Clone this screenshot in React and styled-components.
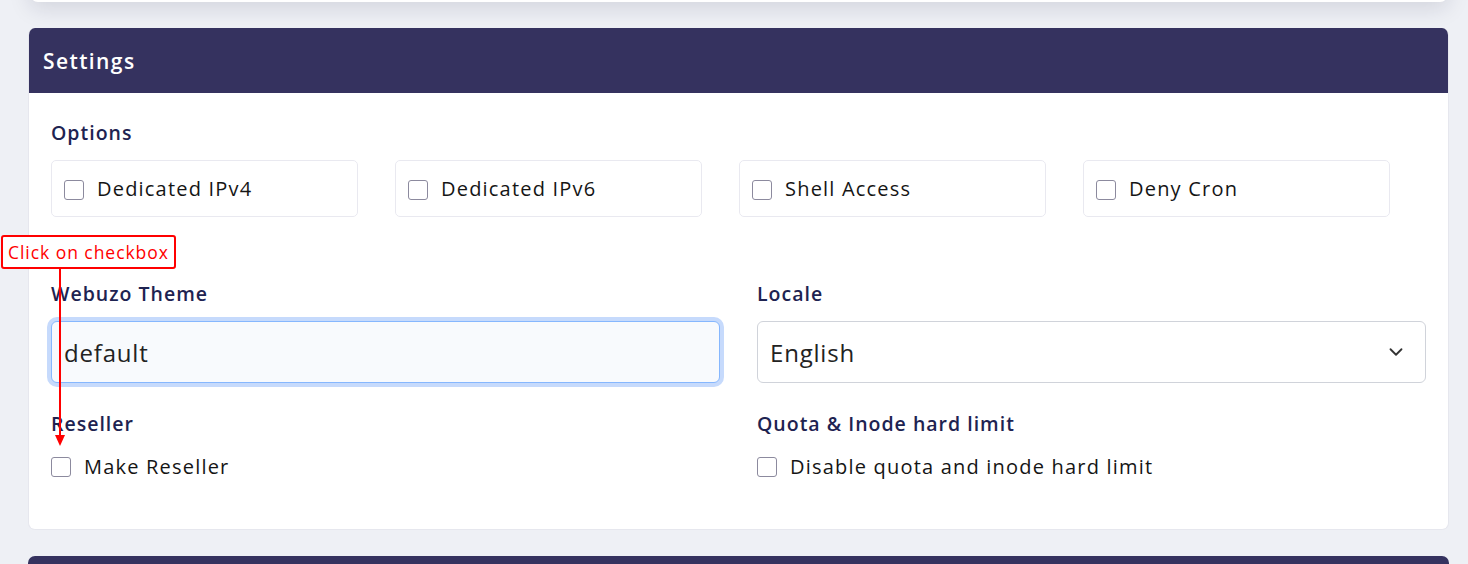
import React from 'react'
import styled, { createGlobalStyle } from 'styled-components';
import { ChevronDown } from 'lucide-react';

const GlobalStyle = createGlobalStyle`
  html, body {
    margin: 0;
    padding: 0;
    background: #eef0f5;
    font-family: "Open Sans", "Noto Sans", sans-serif;
    overflow: hidden;
  }
`;

const Page = styled.div`
  position: relative;
  display: flow-root;
  padding: 0 19px 0 28px;
  height: 564px;
`;

const TopCard = styled.div`
  height: 42px;
  margin: -40px 1px 0 2px;
  background: #fff;
  border-radius: 0 0 8px 8px;
  box-shadow: 0 6px 22px rgba(20, 24, 60, 0.13);
`;

const Card = styled.section`
  margin-top: 26px;
  background: #fff;
  border-radius: 7px;
  overflow: hidden;
  border: 1px solid #e6e7ee;
  border-top: none;
`;

const CardHead = styled.div`
  height: 65px;
  background: #35325f;
  color: #fff;
  display: flex;
  align-items: center;
  padding: 0 15px;
  font-size: 21px;
  font-weight: 600;
  letter-spacing: 1.4px;
  margin: 0 -1px;
`;

const CardBody = styled.div`
  padding: 26px 22px 48px 22px;
`;

const Label = styled.div`
  font-size: 19.5px;
  line-height: 27px;
  font-weight: 600;
  color: #1e2351;
  letter-spacing: 1px;
`;

const OptionGrid = styled.div`
  display: grid;
  grid-template-columns: repeat(4, 307px);
  column-gap: 37px;
  margin-top: 14px;
`;

const OptionBox = styled.label`
  height: 57px;
  box-sizing: border-box;
  border: 1px solid #e9e9f0;
  border-radius: 5px;
  display: flex;
  align-items: center;
  padding: 0 12px;
  gap: 13px;
`;

const Box = styled.span`
  width: 20px;
  height: 20px;
  box-sizing: border-box;
  border: 1px solid #8c8a9e;
  border-radius: 3px;
  background: #fff;
  flex: none;
  margin-top: 2px;
`;

const BoxText = styled.span`
  font-size: 20px;
  color: #151515;
  letter-spacing: 1.2px;
`;

const Columns = styled.div`
  display: grid;
  grid-template-columns: 1fr 1fr;
  column-gap: 37px;
  margin-top: ${p => p.$top}px;
`;

const Field = styled.div`
  display: flex;
  flex-direction: column;
`;

const Input = styled.div`
  margin-top: 14px;
  height: 62px;
  box-sizing: border-box;
  border-radius: 6px;
  display: flex;
  align-items: center;
  justify-content: space-between;
  padding: 0 18px 0 12px;
  font-size: 24px;
  letter-spacing: 0.8px;
  color: #222;
  background: ${p => (p.$focus ? '#f8fafd' : '#fff')};
  border: 1px solid ${p => (p.$focus ? '#86b7fe' : '#d0d3da')};
  box-shadow: ${p => (p.$focus ? '0 0 0 4px #c6dafc' : 'none')};
`;

const CheckRow = styled.label`
  margin-top: 14px;
  height: 30px;
  display: flex;
  align-items: center;
  gap: 13px;
`;

const NextCard = styled.div`
  margin-top: 26px;
  height: 20px;
  background: #35325f;
  border-radius: 7px 7px 0 0;
`;

const Callout = styled.div`
  position: absolute;
  left: 1px;
  top: 235px;
  height: 34px;
  box-sizing: border-box;
  padding: 0 5px;
  border: 2px solid #f00;
  border-radius: 3px;
  background: #fff;
  color: #f00;
  font-size: 17.5px;
  letter-spacing: 0.95px;
  display: flex;
  align-items: center;
  white-space: nowrap;
`;

const Arrow = styled.svg`
  position: absolute;
  left: 54px;
  top: 269px;
`;

export default function App() {
  const options = ['Dedicated IPv4', 'Dedicated IPv6', 'Shell Access', 'Deny Cron'];
  return (
    <>
      <GlobalStyle />
      <Page>
        <TopCard />
        <Card>
          <CardHead>Settings</CardHead>
          <CardBody>
            <Label>Options</Label>
            <OptionGrid>
              {options.map(o => (
                <OptionBox key={o}>
                  <Box />
                  <BoxText>{o}</BoxText>
                </OptionBox>
              ))}
            </OptionGrid>
            <Columns $top={63}>
              <Field>
                <Label>Webuzo Theme</Label>
                <Input $focus>default</Input>
              </Field>
              <Field>
                <Label>Locale</Label>
                <Input>
                  English
                  <ChevronDown size={22} strokeWidth={2} color="#333" />
                </Input>
              </Field>
            </Columns>
            <Columns $top={27}>
              <Field>
                <Label>Reseller</Label>
                <CheckRow>
                  <Box />
                  <BoxText>Make Reseller</BoxText>
                </CheckRow>
              </Field>
              <Field>
                <Label>Quota &amp; Inode hard limit</Label>
                <CheckRow>
                  <Box />
                  <BoxText>Disable quota and inode hard limit</BoxText>
                </CheckRow>
              </Field>
            </Columns>
          </CardBody>
        </Card>
        <NextCard />
        <Callout>Click on checkbox</Callout>
        <Arrow width="12" height="178" viewBox="0 0 12 178">
          <line x1="6" y1="0" x2="6" y2="167" stroke="#f00" strokeWidth="2" />
          <polygon points="1,166 11,166 6,177" fill="#f00" />
        </Arrow>
      </Page>
    </>
  );
}
